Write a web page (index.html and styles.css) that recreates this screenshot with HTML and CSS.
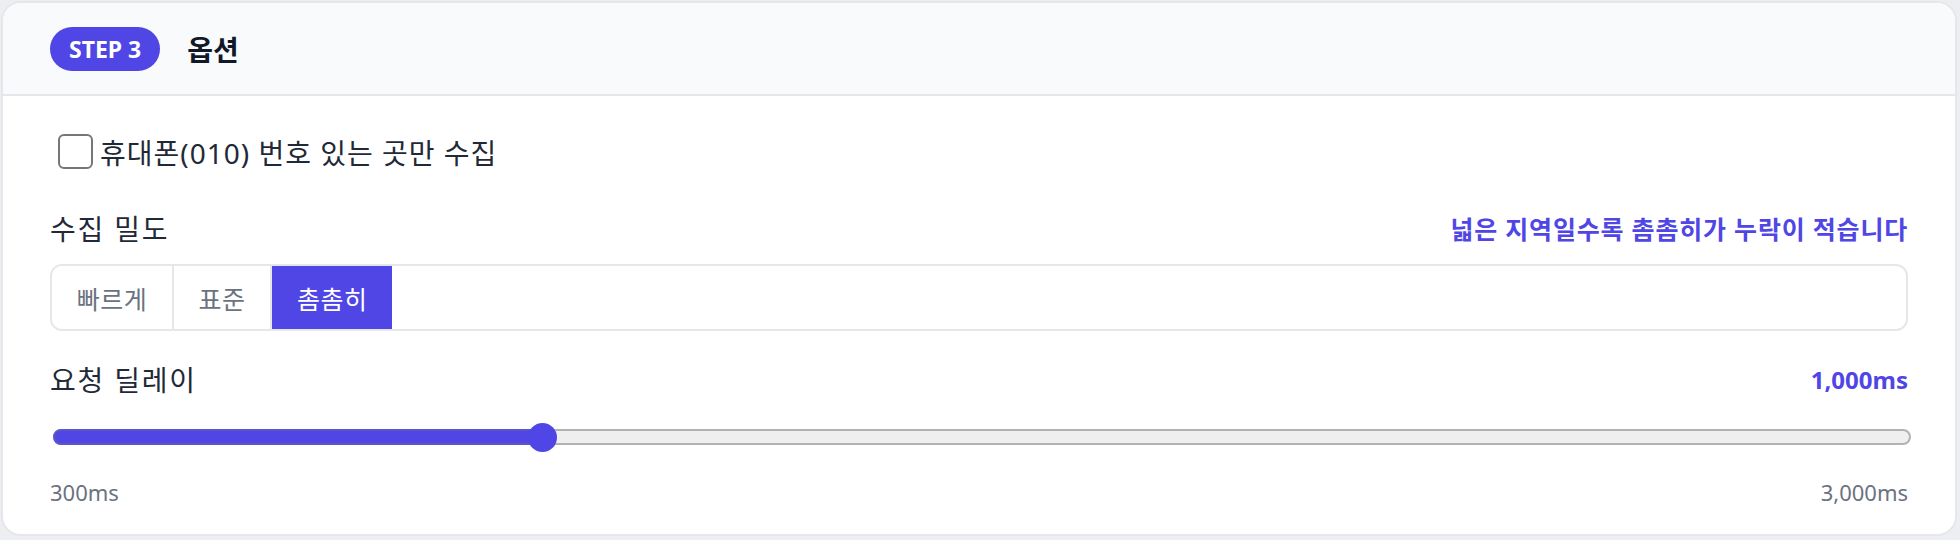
FILE: index.html
```html
<!DOCTYPE html>
<html lang="ko">
<head>
    <meta charset="UTF-8">
    <meta name="viewport" content="width=device-width, initial-scale=1.0">
    <title>옵션</title>
    <link rel="stylesheet" href="styles.css">
</head>
<body>
    <section class="step-card">
        <div class="step-header">
            <span class="step-badge">STEP 3</span>
            <h2>옵션</h2>
        </div>
        <div class="step-body">
            <label class="check-row">
                <span class="check-box"></span>
                <span>휴대폰(010) 번호 있는 곳만 수집</span>
            </label>

            <div class="field-head">
                <span class="field-label">수집 밀도</span>
                <span class="field-note">넓은 지역일수록 촘촘히가 누락이 적습니다</span>
            </div>
            <div class="segmented">
                <button class="seg-btn">빠르게</button>
                <button class="seg-btn">표준</button>
                <button class="seg-btn active">촘촘히</button>
            </div>

            <div class="field-head delay-head">
                <span class="field-label">요청 딜레이</span>
                <span class="field-value">1,000ms</span>
            </div>
            <div class="slider">
                <div class="slider-track">
                    <div class="slider-fill" style="width: 26.3%"></div>
                    <div class="slider-thumb" style="left: 26.3%"></div>
                </div>
            </div>
            <div class="slider-scale">
                <span>300ms</span>
                <span>3,000ms</span>
            </div>
        </div>
    </section>
</body>
</html>
```

FILE: styles.css
```css
:root {
    --primary-color: #4f46e5;
    --border-color: #e5e7eb;
    --text-dark: #1f2937;
    --text-muted: #6b7280;
}

* {
    box-sizing: border-box;
}

body {
    font-family: 'Noto Sans', 'Noto Sans CJK KR', sans-serif;
    margin: 0;
    padding: 1px 3px 4px 1px;
    background: #eceef2;
    height: 540px;
    color: var(--text-dark);
}

.step-card {
    height: 100%;
    background: #ffffff;
    border: 2px solid var(--border-color);
    border-radius: 20px;
    overflow: hidden;
}

.step-header {
    display: flex;
    align-items: center;
    gap: 27px;
    height: 93px;
    padding: 0 47px;
    background: #f9fafb;
    border-bottom: 2px solid var(--border-color);
}

.step-badge {
    display: inline-flex;
    align-items: center;
    height: 44px;
    padding: 0 19px;
    border-radius: 22px;
    background: var(--primary-color);
    color: #ffffff;
    font-size: 23px;
    font-weight: 700;
}

.step-header h2 {
    margin: 0;
    font-size: 28px;
    font-weight: 700;
    color: #111827;
}

.step-body {
    padding: 38px 47px 0;
}

.check-row {
    display: flex;
    align-items: center;
    gap: 7px;
    height: 35px;
    padding-left: 8px;
    font-size: 28px;
    letter-spacing: 1px;
}

.check-box {
    width: 35px;
    height: 35px;
    border: 2px solid #767676;
    border-radius: 6px;
    background: #ffffff;
}

.field-head {
    display: flex;
    justify-content: space-between;
    align-items: center;
    height: 32px;
    margin-top: 43px;
}

.field-label {
    font-size: 28px;
    letter-spacing: 1.8px;
}

.field-note {
    color: var(--primary-color);
    font-weight: 700;
    font-size: 25px;
    letter-spacing: 0.8px;
}

.field-value {
    color: var(--primary-color);
    font-weight: 700;
    font-size: 24px;
}

.segmented {
    display: flex;
    height: 67px;
    margin-top: 20px;
    border: 2px solid var(--border-color);
    border-radius: 12px;
    overflow: hidden;
}

.seg-btn {
    font-family: inherit;
    font-size: 25px;
    letter-spacing: 0.5px;
    color: var(--text-muted);
    background: #ffffff;
    border: none;
    border-right: 2px solid var(--border-color);
    padding: 0 24.7px;
    cursor: pointer;
}

.seg-btn.active {
    background: var(--primary-color);
    color: #ffffff;
    border-right: none;
}

.delay-head {
    margin-top: 32px;
}

.slider {
    display: flex;
    align-items: center;
    height: 30px;
    margin-top: 27px;
}

.slider-track {
    position: relative;
    flex: 1;
    height: 16px;
    margin: 0 -3px 0 3px;
    border: 2px solid #b2b2b2;
    border-radius: 8px;
    background: #efefef;
}

.slider-fill {
    height: 16px;
    margin: -2px 0 0 -2px;
    border: 2px solid #5b56c8;
    border-radius: 8px;
    background: var(--primary-color);
}

.slider-thumb {
    position: absolute;
    top: 50%;
    width: 29px;
    height: 29px;
    margin: -14.5px 0 0 -14.5px;
    border-radius: 50%;
    background: var(--primary-color);
}

.slider-scale {
    display: flex;
    justify-content: space-between;
    margin-top: 25px;
    font-size: 22px;
    color: var(--text-muted);
}
```
